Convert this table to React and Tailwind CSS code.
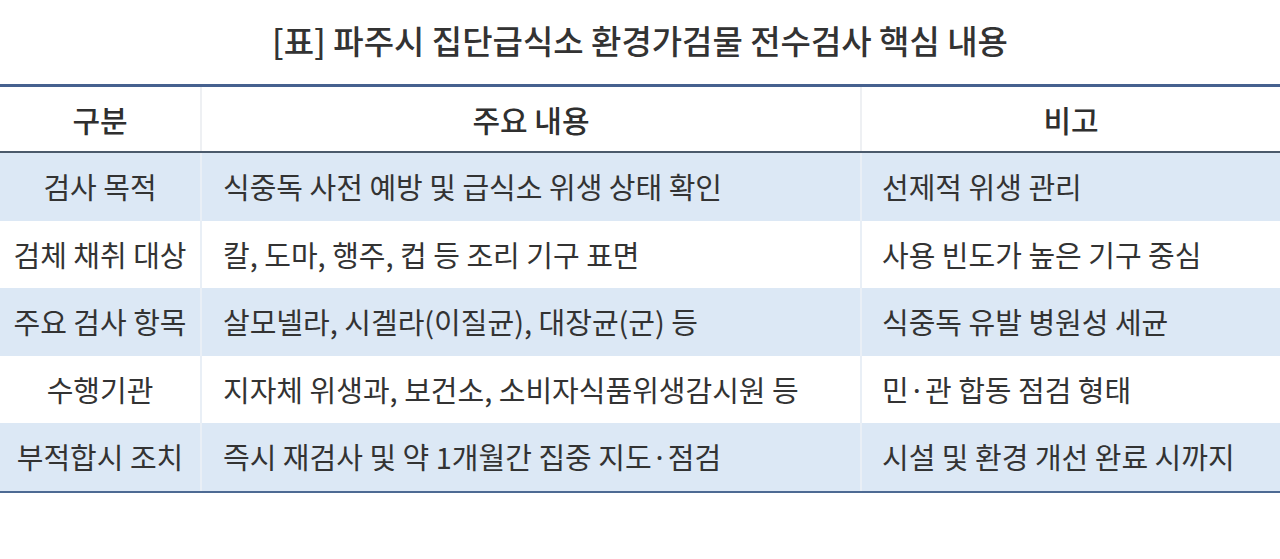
import React from 'react'

const rows = [
  ['검사 목적', '식중독 사전 예방 및 급식소 위생 상태 확인', '선제적 위생 관리'],
  ['검체 채취 대상', '칼, 도마, 행주, 컵 등 조리 기구 표면', '사용 빈도가 높은 기구 중심'],
  ['주요 검사 항목', '살모넬라, 시겔라(이질균), 대장균(군) 등', '식중독 유발 병원성 세균'],
  ['수행기관', '지자체 위생과, 보건소, 소비자식품위생감시원 등', '민·관 합동 점검 형태'],
  ['부적합시 조치', '즉시 재검사 및 약 1개월간 집중 지도·점검', '시설 및 환경 개선 완료 시까지'],
]

export default function App() {
  return (
    <div
      className="w-[1280px] h-[559px] bg-white text-[#333]"
      style={{ fontFamily: '"Noto Sans CJK KR", "Noto Sans", sans-serif' }}
    >
      <h1 className="h-[84px] flex items-center justify-center text-[33px] font-medium text-[#333] pb-[2px]">
        [표] 파주시 집단급식소 환경가검물 전수검사 핵심 내용
      </h1>
      {/* 표 본문 */}
      <div className="border-t-[3px] border-[#46618f] border-b-2 border-b-[#4d6a93]">
        <div className="grid grid-cols-[202px_660px_1fr] h-[66px] border-b-2 border-[#4b5a6b] text-[30px] font-medium text-[#2f2f2f]">
          <div className="flex items-center justify-center border-r-2 border-[#eef0f3]">구분</div>
          <div className="flex items-center justify-center border-r-2 border-[#eef0f3]">주요 내용</div>
          <div className="flex items-center justify-center">비고</div>
        </div>
        {rows.map((r, i) => (
          <div
            key={i}
            className={
              'grid grid-cols-[202px_660px_1fr] h-[67.5px] text-[29px] text-[#333] ' +
              (i % 2 === 0 ? 'bg-[#dce8f5]' : 'bg-white')
            }
          >
            <div className="flex items-center justify-center border-r-2 border-[#e9eff6] whitespace-nowrap">{r[0]}</div>
            <div className="flex items-center pl-[21px] border-r-2 border-[#e9eff6] whitespace-nowrap">{r[1]}</div>
            <div className="flex items-center pl-[20px] whitespace-nowrap">{r[2]}</div>
          </div>
        ))}
      </div>
    </div>
  )
}
